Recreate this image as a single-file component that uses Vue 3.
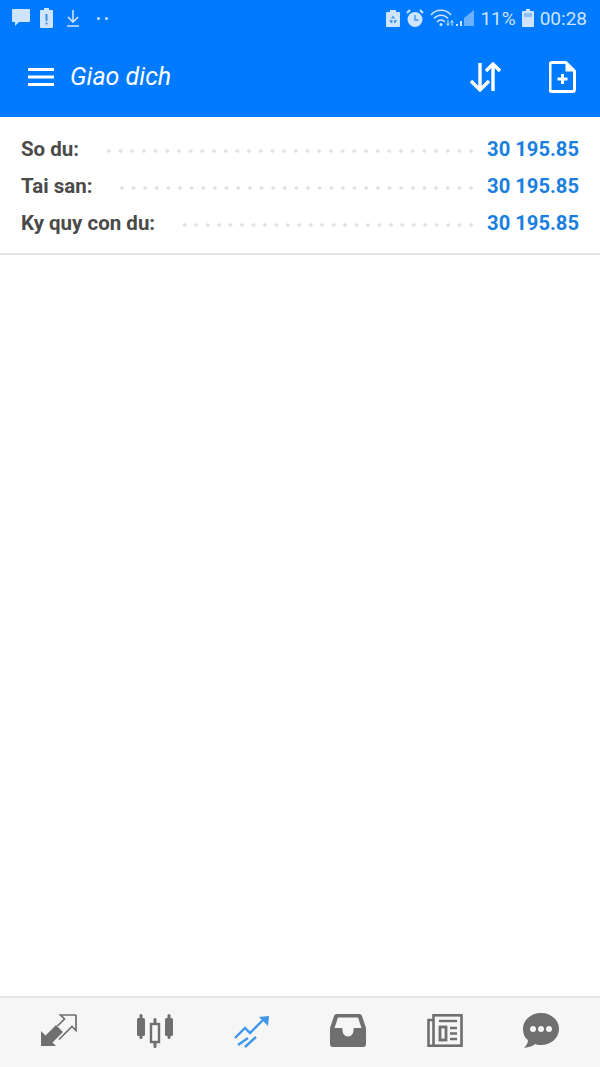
<script setup>
const accounts = [
  { label: 'So du:', value: '30 195.85' },
  { label: 'Tai san:', value: '30 195.85' },
  { label: 'Ky quy con du:', value: '30 195.85' }
]
</script>

<template>
  <div class="screen">
    <header class="appbar">
      <div class="status">
        <div class="status-left">
          <svg width="18" height="20" viewBox="0 0 18 20"><path d="M1 1h16a1 1 0 0 1 1 1v11a1 1 0 0 1-1 1H7l-4 4v-4H1a1 1 0 0 1-1-1V2a1 1 0 0 1 1-1z" fill="#cfe4ff"/></svg>
          <svg width="13" height="20" viewBox="0 0 13 20"><path d="M4 0h5v2h3a1 1 0 0 1 1 1v16a1 1 0 0 1-1 1H1a1 1 0 0 1-1-1V3a1 1 0 0 1 1-1h3z" fill="#cfe4ff"/><path d="M5.500 6h2v7h-2zM5.500 14.500h2v2h-2z" fill="#3f8fe6"/></svg>
          <svg class="dl" width="14" height="18" viewBox="0 0 14 18"><path d="M7 1v12M2 8l5 5 5-5M1 17h12" fill="none" stroke="#cfe4ff" stroke-width="1.600"/></svg>
          <span class="dots"><i></i><i></i></span>
        </div>
        <div class="status-right">
          <svg width="14" height="18" viewBox="0 0 14 18"><path d="M4 1h6v2h3a1 1 0 0 1 1 1v13a1 1 0 0 1-1 1H1a1 1 0 0 1-1-1V4a1 1 0 0 1 1-1h3z" fill="#cfe4ff"/><path d="M7 6.500l2.200 3H4.800zM3.500 11h3v3h-2zM8 11h3l-1.500 3H8z" fill="#4a9bf0"/></svg>
          <svg width="18" height="19" viewBox="0 0 18 19"><circle cx="9" cy="10.500" r="7.500" fill="#cfe4ff"/><path d="M9 6v5h3.500" fill="none" stroke="#3f96ff" stroke-width="1.400"/><path d="M1 4l3-3M17 4l-3-3" stroke="#cfe4ff" stroke-width="2"/></svg>
          <svg width="44" height="18" viewBox="0 0 44 18"><path d="M1 6a13 13 0 0 1 20 0M4 9.500a9 9 0 0 1 14 0M7 13a5 5 0 0 1 8 0" fill="none" stroke="#cfe4ff" stroke-width="1.500"/><circle cx="11" cy="15.500" r="1.500" fill="#cfe4ff"/><path d="M18 11v5M16.500 14.500l1.500 2 1.500-2M22 17v-5M20.500 13.500l1.500-2 1.500 2" fill="none" stroke="#cfe4ff" stroke-width="1"/><path d="M26 17h2v-2h-2zM30 17h2v-5h-2z" fill="#cfe4ff"/><path d="M34 17V9l10-8v16z" fill="#6db0ff"/></svg>
          <span class="status-text">11%</span>
          <svg width="12" height="18" viewBox="0 0 12 18"><path d="M4 0h4v2h3a1 1 0 0 1 1 1v14a1 1 0 0 1-1 1H1a1 1 0 0 1-1-1V3a1 1 0 0 1 1-1h3z" fill="#cfe4ff"/><path d="M2 4h8v4H2z" fill="#8fc0ff"/></svg>
          <span class="status-text">00:28</span>
        </div>
      </div>
      <div class="toolbar">
        <svg class="menu" width="26" height="18" viewBox="0 0 26 18"><path d="M0 1.500h26M0 9h26M0 16.500h26" stroke="#fff" stroke-width="3"/></svg>
        <span class="title">Giao dich</span>
        <svg class="sort" width="34" height="30" viewBox="0 0 34 30"><path d="M11 1v27M2 19l9 9 9-9" fill="none" stroke="#fff" stroke-width="3.400"/><path d="M24 29V2M17 9l7-7 7 7" fill="none" stroke="#fff" stroke-width="3.400"/></svg>
        <svg class="new" width="27" height="32" viewBox="0 0 27 32"><path d="M3 1.500h14l8.500 8.500v18.500a2 2 0 0 1-2 2H3a2 2 0 0 1-2-2v-25a2 2 0 0 1 2-2z" fill="none" stroke="#fff" stroke-width="3" stroke-linejoin="round"/><path d="M16.500 1.500l9 9h-9z" fill="#fff"/><path d="M13.500 13v10M8.500 18h10" stroke="#fff" stroke-width="3"/></svg>
      </div>
    </header>

    <main class="content">
      <section class="summary">
        <div v-for="row in accounts" :key="row.label" class="row">
          <span class="label">{{ row.label }}</span>
          <span class="leader"></span>
          <span class="value">{{ row.value }}</span>
        </div>
      </section>
    </main>

    <nav class="tabs">
      <svg width="38" height="36" viewBox="0 0 38 36" fill="none" stroke="#6f6f6f" stroke-width="1.700">
        <path d="M1 33V18l4.500 4.500L16 12l7 7-10.500 10.500L16 33z" fill="#6f6f6f" stroke="none"/>
        <path d="M36 2H20.500l4 4-7 7M36 2v15.500l-4-4L19 26.500"/>
      </svg>
      <svg width="36" height="34" viewBox="0 0 36 34" fill="#6f6f6f">
        <rect x="2.500" y="0" width="3" height="25" rx="1.500"/>
        <rect x="0" y="4" width="8" height="18" rx="1.500"/>
        <rect x="30.500" y="0" width="3" height="25" rx="1.500"/>
        <rect x="28" y="4" width="8" height="18" rx="1.500"/>
        <rect x="16.500" y="4" width="3" height="30" rx="1.500"/>
        <rect x="14" y="10" width="8" height="18" fill="#f6f6f6" stroke="#6f6f6f" stroke-width="2.400"/>
      </svg>
      <svg width="36" height="34" viewBox="0 0 36 34" fill="none" stroke="#3f97ec" stroke-width="2.400">
        <path d="M1 24l10-10 5 5 13-13"/>
        <path d="M25 3l10-1-1 10z" fill="#3f97ec" stroke="none"/>
        <path d="M4 31l10-7M11 33l11-10"/>
      </svg>
      <svg width="36" height="33" viewBox="0 0 36 33">
        <path d="M7 0h22a3 3 0 0 1 3 2l4 12v16a3 3 0 0 1-3 3H3a3 3 0 0 1-3-3V14L4 2a3 3 0 0 1 3-2z" fill="#6f6f6f"/>
        <path d="M8 3.500h20l3.500 10.500h-7c-1 0-1 1-1 2 0 3-2 6.500-5.500 6.500s-5.500-3.500-5.500-6.500c0-1 0-2-1-2h-7z" fill="#f6f6f6"/>
      </svg>
      <svg width="36" height="33" viewBox="0 0 36 33" fill="none" stroke="#6f6f6f">
        <rect x="6.500" y="1.300" width="28" height="30.400" stroke-width="2.600"/>
        <path d="M6.500 6H1.500v25.700h5" stroke-width="2.600"/>
        <path d="M12 7h18" stroke-width="2.400"/>
        <rect x="13" y="13" width="6" height="13" stroke-width="2.800"/>
        <path d="M23 14h7M23 19.500h7M23 25h7" stroke-width="2.600"/>
      </svg>
      <svg width="36" height="36" viewBox="0 0 36 36">
        <path d="M18 0c10 0 18 7 18 16s-8 16-18 16c-2 0-4 0-6-1-2 2-5 3-11 4 2-2 4-5 4-8C2 25 0 21 0 16 0 7 8 0 18 0z" fill="#6f6f6f"/>
        <circle cx="10" cy="16" r="3" fill="#f6f6f6"/><circle cx="18" cy="16" r="3" fill="#f6f6f6"/><circle cx="26" cy="16" r="3" fill="#f6f6f6"/>
      </svg>
    </nav>
  </div>
</template>

<style scoped>
.screen {
  height: 1067px;
  display: flex;
  flex-direction: column;
  background: #fff;
  font-family: Roboto, "Liberation Sans", sans-serif;
}

.appbar {
  height: 117px;
  flex: none;
  background: #007aff;
}

.status {
  height: 36px;
  display: flex;
  justify-content: space-between;
  align-items: center;
  padding: 0 13px 0 12px;
}

.status-left,
.status-right {
  display: flex;
  align-items: center;
}

.status-left {
  gap: 10px;
}

.status-right {
  gap: 6px;
}

.status-text {
  font-size: 19px;
  color: #cfe4ff;
}

.dl {
  margin-left: 3px;
}

.dots {
  display: flex;
  gap: 5px;
  margin-left: 7px;
}

.dots i {
  width: 3px;
  height: 3px;
  border-radius: 50%;
  background: #cfe4ff;
}

.toolbar {
  height: 81px;
  display: flex;
  align-items: center;
  padding: 0 24px 0 28px;
}

.title {
  flex: 1;
  margin-left: 16px;
  font-size: 25px;
  font-style: italic;
  color: #fff;
}

.new {
  margin-left: 46px;
}

.content {
  flex: 1;
}

.summary {
  height: 138px;
  box-sizing: border-box;
  padding: 13px 21px 0;
  border-bottom: 2px solid #e4e4e4;
}

.row {
  height: 37px;
  display: flex;
  align-items: center;
  font-weight: 700;
}

.label {
  font-size: 20.500px;
  color: #4a4a4a;
}

.leader {
  flex: 1;
  height: 4px;
  margin: 4px 10px 0 24px;
  background-image: radial-gradient(circle, #e2e2e2 1.500px, transparent 2px);
  background-size: 11.670px 4px;
  background-repeat: round no-repeat;
}

.value {
  font-size: 20.200px;
  color: #1a7fe0;
}

.tabs {
  height: 71px;
  flex: none;
  box-sizing: border-box;
  border-top: 2px solid #e6e6e6;
  background: #f6f6f6;
  display: grid;
  grid-template-columns: repeat(6, 96.400px);
  justify-content: center;
  justify-items: center;
  align-items: center;
  padding-bottom: 4px;
}
</style>
